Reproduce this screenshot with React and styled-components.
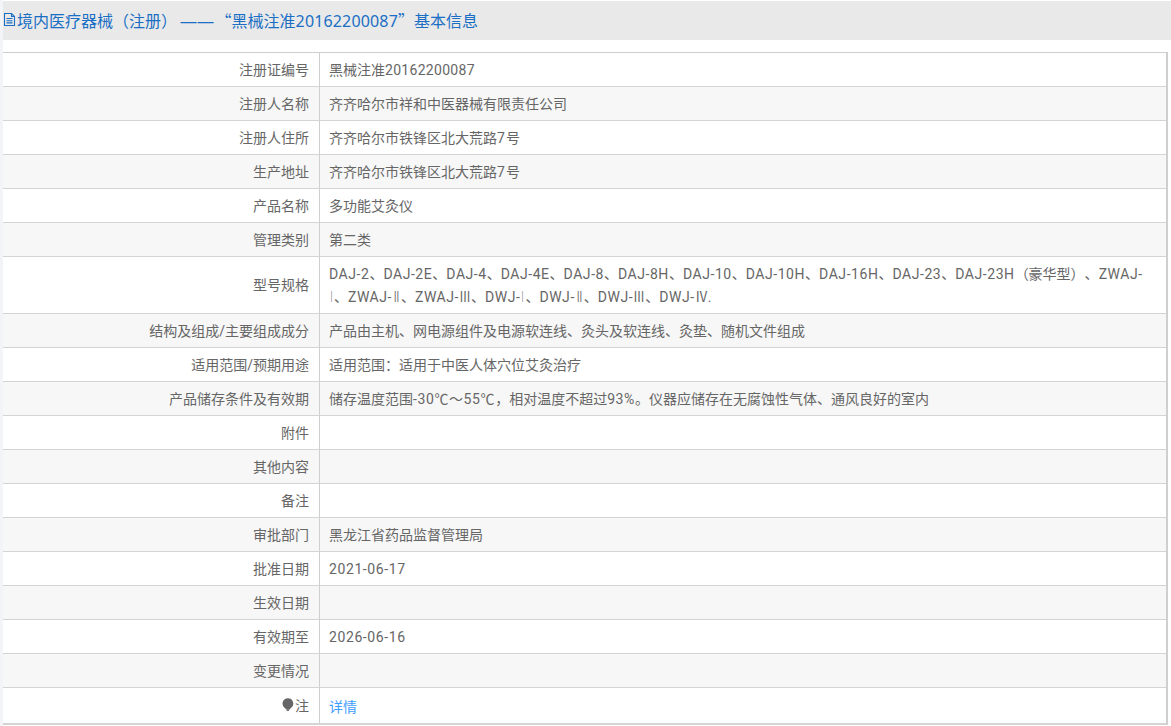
import React from "react";
import styled, { createGlobalStyle } from "styled-components";

const Global = createGlobalStyle`
  html, body { margin: 0; padding: 0; background: #fff; }
  body {
    font-family: Roboto, "Noto Sans CJK SC", sans-serif;
    text-spacing-trim: space-all;
    overflow: hidden;
  }
`;

const Page = styled.div`
  width: 1171px;
  height: 726px;
  box-sizing: border-box;
  padding: 1px 0 0 3px;
  background: linear-gradient(90deg, #f3f4f8 3px, #fff 3px);
`;

const Title = styled.h1`
  margin: 0;
  height: 39px;
  box-sizing: border-box;
  padding-bottom: 2px;
  background: #e9e9e9;
  color: #1a6fc4;
  font-family: "Noto Sans CJK SC", sans-serif;
  font-size: 16px;
  font-weight: 400;
  white-space: pre;
  display: flex;
  align-items: center;
  gap: 1px;
`;

const TitleNumber = styled.span`
  font-family: "Noto Sans", sans-serif;
  letter-spacing: 0.15px;
`;

const Dash = styled.span`
  font-family: "Liberation Sans", sans-serif;
  letter-spacing: 1px;
  margin-right: 1px;
`;

const Table = styled.div`
  margin-top: 12px;
  width: 1165px;
  box-sizing: border-box;
  border-top: 1px solid #cfcfcf;
  border-right: 2px solid #cfcfcf;
`;

const Row = styled.div`
  display: grid;
  grid-template-columns: 317px 1fr;
  min-height: ${(p) => (p.$last ? 35 : 33)}px;
  border-bottom: ${(p) => (p.$last ? 2 : 1)}px solid #d4d4d4;
  background: ${(p) => (p.$alt ? "#f7f7f7" : "#fff")};
`;

const Label = styled.div`
  display: flex;
  align-items: center;
  justify-content: flex-end;
  gap: 1px;
  padding-right: 10px;
  padding-bottom: 2px;
  border-right: 1px solid #cfcfcf;
  font-size: 14px;
  color: #666;
`;

const Value = styled.div`
  padding: ${(p) => (p.$last ? "8px 10px 2px 9px" : "6px 10px 4px 9px")};
  font-size: 14px;
  line-height: 23px;
  color: #666;
`;

const Code = styled.span`
  letter-spacing: ${(p) => p.$track || 0.55}px;
`;

const RomanBox = styled.span`
  display: inline-block;
  width: ${(p) => p.$w}px;
  line-height: 1;
`;

const RomanGlyph = styled.span`
  display: inline-block;
  font-family: "Noto Sans CJK SC", sans-serif;
  font-feature-settings: "palt", "pwid";
  line-height: 1;
  transform-origin: left center;
  transform: scaleX(${(p) => p.$w / 14});
`;

const Link = styled.a`
  color: #409eff;
  text-decoration: none;
`;

const DocIcon = styled.svg`
  width: 13px;
  height: 15px;
  flex: none;
`;

const BulbIcon = styled.svg`
  width: 12px;
  height: 13px;
  flex: none;
`;

const widths = { "Ⅰ": 5, "Ⅱ": 9, "Ⅲ": 12, "Ⅳ": 13 };

const Numeral = ({ n }) => (
  <RomanBox $w={widths[n]}>
    <RomanGlyph $w={widths[n]}>{n}</RomanGlyph>
  </RomanBox>
);

const model = (
  <>
    {["DAJ-2", "DAJ-2E", "DAJ-4", "DAJ-4E", "DAJ-8", "DAJ-8H", "DAJ-10", "DAJ-10H", "DAJ-16H", "DAJ-23"].map((m) => (
      <React.Fragment key={m}><Code>{m}</Code>、</React.Fragment>
    ))}
    <Code>DAJ-23H</Code>（豪华型）、<Code>ZWAJ-</Code><br /><Numeral n="Ⅰ" />、
    {[["ZWAJ-", "Ⅱ"], ["ZWAJ-", "Ⅲ"], ["DWJ-", "Ⅰ"], ["DWJ-", "Ⅱ"], ["DWJ-", "Ⅲ"]].map(([m, n]) => (
      <React.Fragment key={m + n}><Code>{m}</Code><Numeral n={n} />、</React.Fragment>
    ))}
    <Code>DWJ-</Code><Numeral n="Ⅳ" />.
  </>
);

const rows = [
  ["注册证编号", <>黑械注准<Code $track={0.3}>20162200087</Code></>],
  ["注册人名称", "齐齐哈尔市祥和中医器械有限责任公司"],
  ["注册人住所", <>齐齐哈尔市铁锋区北大荒路<Code $track={1}>7</Code>号</>],
  ["生产地址", <>齐齐哈尔市铁锋区北大荒路<Code $track={1}>7</Code>号</>],
  ["产品名称", "多功能艾灸仪"],
  ["管理类别", "第二类"],
  ["型号规格", model],
  ["结构及组成/主要组成成分", "产品由主机、网电源组件及电源软连线、灸头及软连线、灸垫、随机文件组成"],
  ["适用范围/预期用途", "适用范围：适用于中医人体穴位艾灸治疗"],
  ["产品储存条件及有效期", <>储存温度范围<Code $track={0.6}>-30℃～55℃</Code>，相对温度不超过<Code $track={0.6}>93%</Code>。仪器应储存在无腐蚀性气体、通风良好的室内</>],
  ["附件", ""],
  ["其他内容", ""],
  ["备注", ""],
  ["审批部门", "黑龙江省药品监督管理局"],
  ["批准日期", <Code $track={0.6}>2021-06-17</Code>],
  ["生效日期", ""],
  ["有效期至", <Code $track={0.6}>2026-06-16</Code>],
  ["变更情况", ""],
];

export default function App() {
  return (
    <Page>
      <Global />
      <Title>
        <DocIcon viewBox="0 0 13 15" fill="none" stroke="#1a6fc4" strokeWidth="1.1">
          <path d="M1.500 1.500h7l3 3v9h-10zM8.500 1.500v3h3M3.500 6.500h6M3.500 8.700h6M3.500 10.900h6" />
        </DocIcon>
        <span>境内医疗器械（注册） <Dash>——</Dash>“黑械注准<TitleNumber>20162200087</TitleNumber>”基本信息</span>
      </Title>
      <Table>
        {rows.map(([k, v], i) => (
          <Row key={k} $alt={i % 2 === 1}>
            <Label>{k}</Label>
            <Value>{v}</Value>
          </Row>
        ))}
        <Row $last>
          <Label>
            <BulbIcon viewBox="0 0 12 13" fill="#666">
              <path d="M5.800 .3a5.300 5.300 0 0 0-3.300 9.400c.7.600 1.300 1 1.500 1.800h3.800c.2-.8.800-1.200 1.500-1.800A5.300 5.300 0 0 0 5.800.3zM4.300 11.800h3.200l-.8 1.200H5z" />
            </BulbIcon>
            注
          </Label>
          <Value $last><Link href="#">详情</Link></Value>
        </Row>
      </Table>
    </Page>
  );
}
